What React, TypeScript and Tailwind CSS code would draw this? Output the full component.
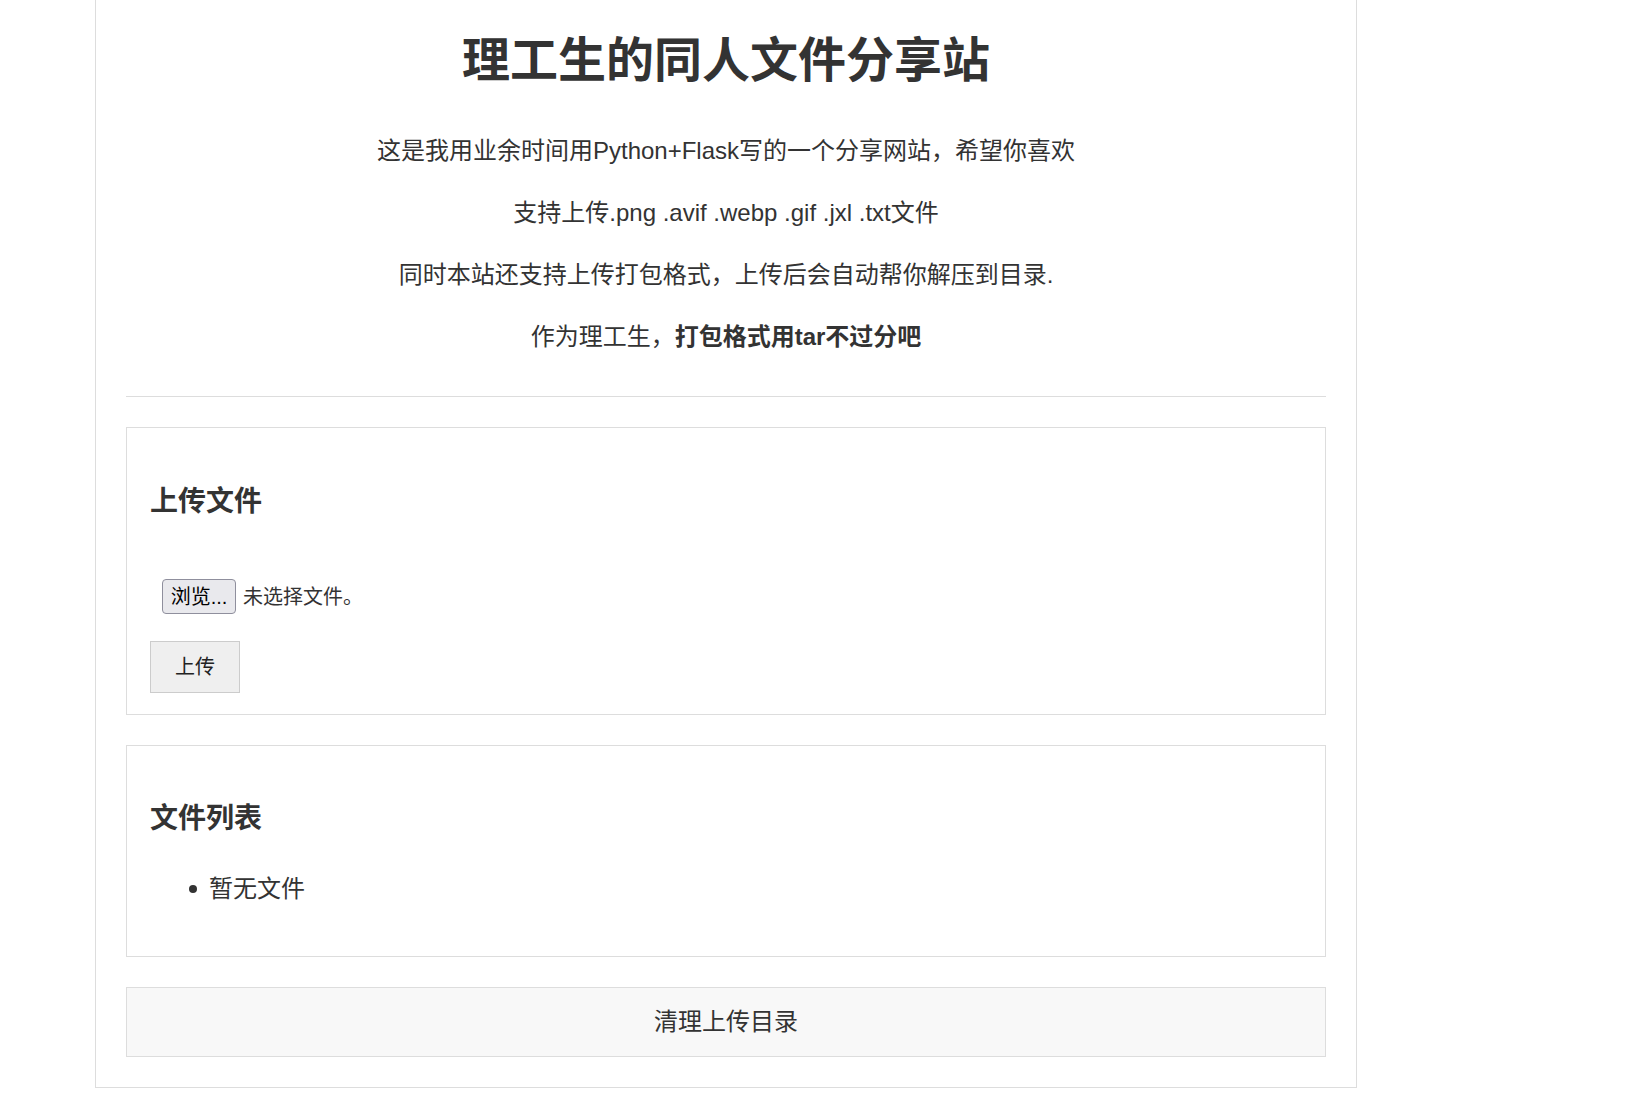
import React from "react";

const font = {
  fontFamily: '"Liberation Sans", "Noto Sans CJK SC", sans-serif',
};

export default function App() {
  return (
    <div className="min-h-[1093px] bg-white text-[#333]" style={font}>
      <div className="ml-[95px] w-[1262px] border-x border-b border-[#ddd] px-[30px] pt-[32px] pb-[30px]">
        <h1 className="m-0 text-center text-[48px] font-bold leading-[58px] text-[#333]">
          理工生的同人文件分享站
        </h1>
        <p className="mt-[41px] text-center text-[24px] leading-[39px]">
          这是我用业余时间用Python+Flask写的一个分享网站，希望你喜欢
        </p>
        <p className="mt-[23px] text-center text-[24px] leading-[39px]">
          支持上传.png .avif .webp .gif .jxl .txt文件
        </p>
        <p className="mt-[23px] text-center text-[24px] leading-[39px]">
          同时本站还支持上传打包格式，上传后会自动帮你解压到目录.
        </p>
        <p className="mt-[23px] text-center text-[24px] leading-[39px]">
          作为理工生，<strong className="font-bold">打包格式用tar不过分吧</strong>
        </p>
        <hr className="mt-[40px] border-0 border-t border-[#ddd]" />

        <section className="mt-[30px] border border-[#ddd] px-[23px] pt-[24px] pb-[21px]">
          <h2 className="mt-[29px] text-[28px] font-bold leading-[42px]">上传文件</h2>
          <div className="mt-[56px] ml-[12px] flex h-[35px] items-center">
            <button className="flex h-[35px] w-[74px] items-center justify-center rounded-[4px] border border-[#8f8f9d] bg-[#e9e9ed] text-[20px] text-black">
              浏览...
            </button>
            <span className="ml-[7px] text-[20px] text-[#333]">未选择文件。</span>
          </div>
          <button className="mt-[27px] flex h-[52px] w-[90px] items-center justify-center border border-[#ccc] bg-[#efefef] text-[20px] text-[#222]">
            上传
          </button>
        </section>

        <section className="mt-[30px] border border-[#ddd] px-[23px] pt-[24px] pb-[48px]">
          <h2 className="mt-[28px] text-[28px] font-bold leading-[42px]">文件列表</h2>
          <ul className="mt-[30px]">
            <li className="flex items-center text-[24px] leading-[38px]">
              <span className="ml-[39px] inline-block h-[8px] w-[8px] rounded-full bg-[#333]" />
              <span className="ml-[12px]">暂无文件</span>
            </li>
          </ul>
        </section>

        <button className="mt-[30px] flex h-[70px] w-full items-center justify-center border border-[#ddd] bg-[#f8f8f8] text-[24px] text-[#333]">
          清理上传目录
        </button>
      </div>
    </div>
  );
}
